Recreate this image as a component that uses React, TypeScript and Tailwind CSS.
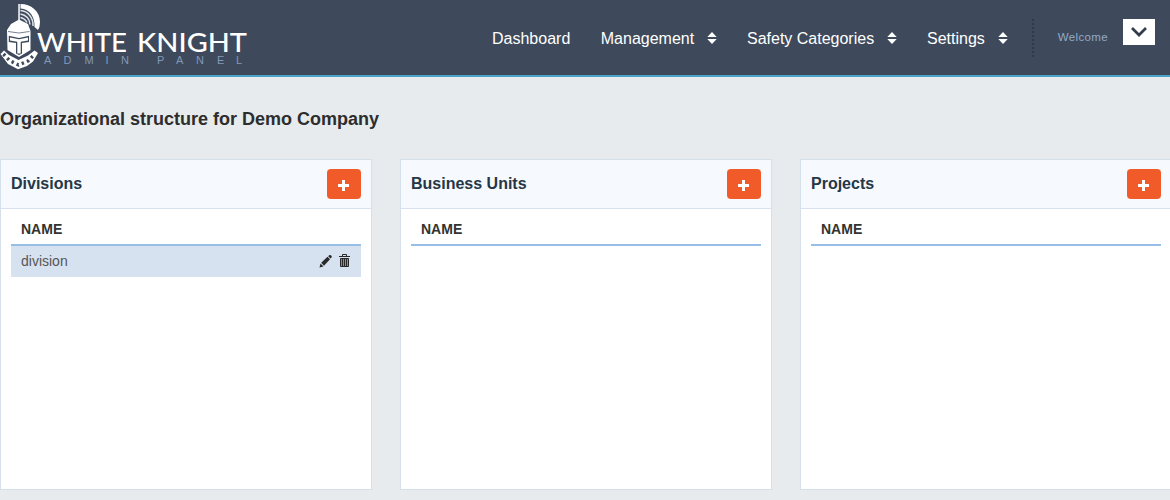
import React from "react";

function Logo() {
  return (
    <svg width="250" height="75" viewBox="0 0 250 75" className="block shrink-0" role="img" aria-label="White Knight">
      <path d="M20.5 4 C31 4 40 11 40 22 Q40 27 38 30 L34.500 27 C35 17 30 9 20.5 8.5 Z" fill="#fff" />
      <path d="M20.500 10.500 C28 11 33.500 18 33 26 M20.500 14 C26 15 30 19 30 24.500 M20.500 17.500 Q25 18.500 27 22.500" fill="none" stroke="#dfe3e8" strokeWidth="1.500" />
      <path d="M18.3 4 H19.8 V22 H18.3 Z" fill="#fff" />
      <path d="M19 19.500 L28 24 L30.500 31 L30.500 50 L19 57 L7.500 50 L7 30 L11 24 Z" fill="#fff" />
      <path d="M8 31.500 Q19 34.500 29.500 31.500" fill="none" stroke="#3e4a5c" strokeWidth="0.700" />
      <path d="M8.800 35.800 L19 38 L29 35.800 V42 L22 43 V53.500 L19 55 L16 53.500 V43 L8.800 42 Z" fill="#3e4a5c" />
      <path d="M10 37.500 L19 39.300 L28 37.500 V40.500 L20.700 41.800 V53.500 H17.300 V41.800 L10 40.500 Z" fill="#fff" />
      <path d="M4 50.500 L9 55 L18.500 60 L28 55.500 L34.500 50.500 L38 53 L33 61.500 L27 66 L18 69.200 L8 64 L0.500 54 Z" fill="#fff" />
      <path d="M3.500 54 L9.500 60.500 L18.500 65 L28 61 L34.500 54.500" fill="none" stroke="#3e4a5c" strokeWidth="3.400" strokeDasharray="2.400 3.200" />
      <g fill="#fff" className="font-['Lato',sans-serif] text-[26px] font-medium">
        <text x="37" y="52" textLength="90" lengthAdjust="spacingAndGlyphs">WHITE</text>
        <text x="137" y="52" textLength="110" lengthAdjust="spacingAndGlyphs">KNIGHT</text>
      </g>
      <g fill="#8298b8" className="font-['Liberation_Sans',sans-serif] text-[11px]">
        <text y="64" x="44 63.500 84.500 105.500 121">ADMIN</text>
        <text y="64" x="157 176 196 217 236">PANEL</text>
      </g>
    </svg>
  );
}

function SortArrows() {
  return (
    <svg width="10" height="12" viewBox="0 0 10 12" className="mt-1 ml-[13px] block" fill="#fff">
      <path d="M5 0 L9.700 5 H0.300 Z M0.300 7 H9.700 L5 12 Z" />
    </svg>
  );
}

function NavItem({ label, menu = false, className }: { label: string; menu?: boolean; className: string }) {
  return (
    <a className={`flex items-start whitespace-nowrap text-base leading-5 text-white ${className}`}>
      <span className="pt-px">{label}</span>
      {menu && <SortArrows />}
    </a>
  );
}

function Panel({ title, rows = [] }: { title: string; rows?: string[] }) {
  return (
    <section className="h-[331px] w-[372px] shrink-0 border border-[#d6e0ea] bg-white">
      <header className="flex h-[49px] justify-between border-b border-[#d6e2ee] bg-[#f6f9fe] px-2.5 pt-[9px]">
        <h2 className="pt-[5px] text-base leading-5 font-bold text-[#253746]">{title}</h2>
        <button className="flex h-[30px] w-[34px] items-center justify-center rounded-[4px] bg-[#f15a29]">
          <svg width="12" height="12" viewBox="0 0 12 12" className="mt-[2px] -ml-[3px]" shapeRendering="crispEdges">
            <path d="M5 1 H8 V5 H12 V8 H8 V12 H5 V8 H1 V5 H5 Z" fill="#fff" />
          </svg>
        </button>
      </header>
      <div className="px-2.5">
        <div className="h-[37px] border-b-2 border-[#97bee6] px-2.5 pt-2.5 text-sm leading-5 font-bold text-[#333]">NAME</div>
        {rows.map((row) => (
          <div key={row} className="flex h-[31px] items-start justify-between bg-[#d7e2f0] pt-[5px] pr-[11px] pl-2.5 text-sm leading-5 text-[#555]">
            <span>{row}</span>
            <span className="flex gap-[7px] pt-[3px]">
              <svg width="13" height="14" viewBox="0 0 13 14" fill="#292929">
                <path d="M0.500 13.500 L1.500 9.500 L4.500 12.500 Z M2.200 8.800 L8.500 2.800 L11 5.300 L5 11.700 Z M9.200 2.200 L10.500 1 Q11.200 0.700 11.800 1.200 L12.600 2 Q13 2.800 12.500 3.400 L11.500 4.600 Z" />
              </svg>
              <svg width="11" height="14" viewBox="0 0 11 14" fill="#8a9098" stroke="#292929">
                <path d="M3.500 2 V0.500 H7.500 V2 M0 2.500 H11" fill="none" />
                <path d="M1.500 4.500 H9.500 V12.500 H1.500 Z M3.500 5 V12 M5.500 5 V12 M7.500 5 V12" />
              </svg>
            </span>
          </div>
        ))}
      </div>
    </section>
  );
}

export default function App() {
  return (
    <div className="h-[500px] w-[1170px] overflow-hidden bg-[#e7ebee] font-['Liberation_Sans',Arial,sans-serif]">
      <header className="flex h-[77px] border-b-2 border-[#4ba3c7] bg-[#3e4a5c]">
        <Logo />
        <nav className="flex items-start pt-7">
          <NavItem label="Dashboard" className="ml-[242px]" />
          <NavItem label="Management" menu className="ml-[30.500px]" />
          <NavItem label="Safety Categories" menu className="ml-[29.800px]" />
          <NavItem label="Settings" menu className="ml-[29.900px]" />
        </nav>
        <svg width="2" height="38" className="mt-[19px] ml-[24px] shrink-0">
          <path d="M1 0 V38" stroke="#2b3b4e" strokeWidth="2" strokeDasharray="2 2" />
        </svg>
        <span className="mt-[29px] ml-[24px] text-[11.500px] leading-4 tracking-[0.350px] text-[#92a9c7]">Welcome</span>
        <button className="mt-[19px] ml-auto mr-[15px] flex h-[26px] w-8 items-center justify-center bg-white">
          <svg width="16" height="10" viewBox="0 0 16 10" fill="none" stroke="#333d4b" strokeWidth="2.700">
            <path d="M1 1 L8 8 L15 1" />
          </svg>
        </button>
      </header>
      <main>
        <h1 className="mt-8 mb-[29px] h-[21px] text-lg leading-[21px] font-bold text-[#2d2d2d]">Organizational structure for Demo Company</h1>
        <div className="flex gap-7">
          <Panel title="Divisions" rows={["division"]} />
          <Panel title="Business Units" />
          <Panel title="Projects" />
        </div>
      </main>
    </div>
  );
}
